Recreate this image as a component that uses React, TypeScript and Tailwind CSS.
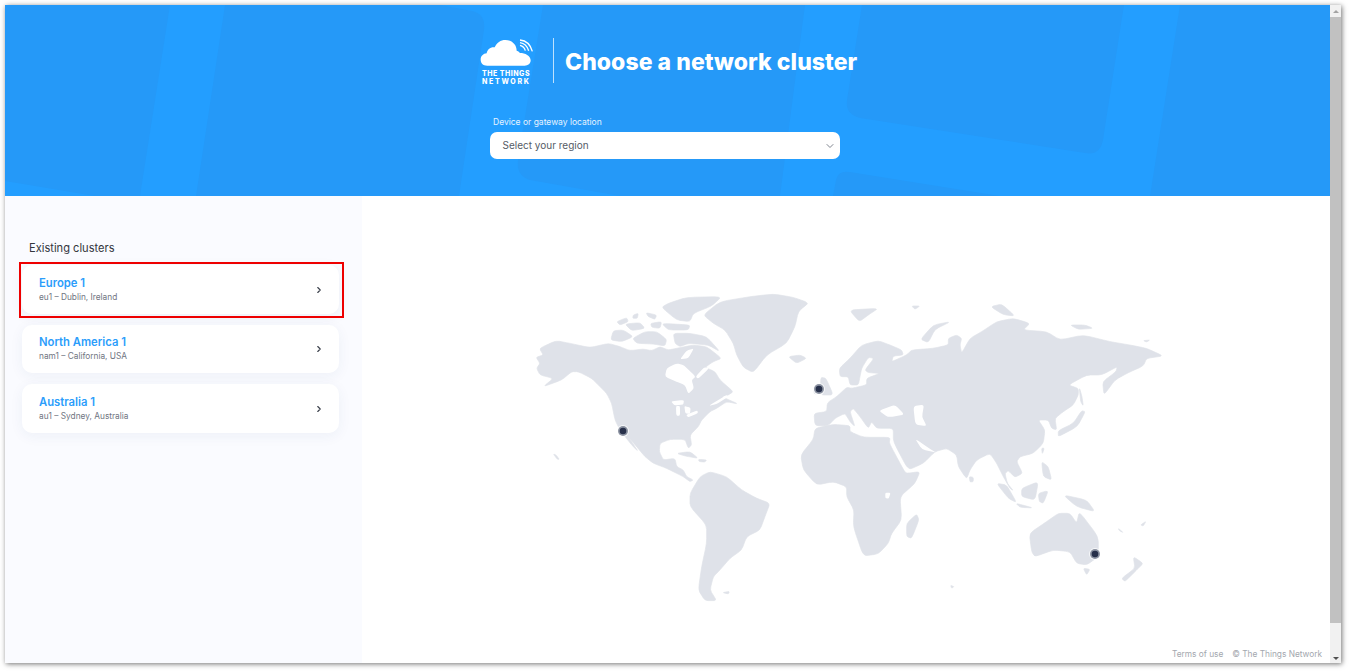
import React from 'react';
import { ChevronDown, ChevronRight } from 'lucide-react';

const clusters = [
  { name: 'Europe 1', detail: 'eu1 – Dublin, Ireland' },
  { name: 'North America 1', detail: 'nam1 – California, USA' },
  { name: 'Australia 1', detail: 'au1 – Sydney, Australia' },
];

const west = [
  // north america
  'M58,205 L108,182 L150,190 L210,203 L265,190 L300,200 L330,212 L370,207 L395,212 L420,200 L445,210 L470,205 L520,195 L560,200 L605,235 L580,245 L555,262 L585,275 L600,300 L640,335 L625,345 L605,350 L655,372 L620,365 L590,385 L570,395 L545,420 L535,440 L510,465 L515,495 L505,505 L495,478 L450,478 L420,490 L418,515 L430,540 L465,535 L470,560 L490,570 L500,590 L520,600 L510,605 L490,590 L440,565 L400,550 L375,530 L350,500 L325,470 L355,515 L335,495 L300,450 L285,420 L275,370 L260,340 L235,315 L215,295 L175,275 L155,275 L125,300 L70,320 L100,295 L60,285 L50,265 L60,250 L48,232 L70,225 Z',
  // arctic islands
  'M272,180 L280,152 L310,150 L340,170 L305,185 Z',
  'M290,125 L320,113 L325,125 L300,135 Z',
  'M315,132 L360,128 L375,145 L335,152 Z',
  'M340,105 L355,100 L352,115 L338,115 Z',
  'M378,98 L410,105 L405,118 L385,110 Z',
  'M392,130 L425,125 L420,145 L395,142 Z',
  'M375,155 L410,155 L440,178 L435,198 L400,192 L350,190 L338,175 Z',
  'M445,70 L500,52 L605,50 L575,78 L520,100 L510,125 L470,120 L425,82 Z',
  'M425,130 L510,135 L505,150 L445,150 Z',
  'M460,160 L510,160 L560,170 L600,215 L565,195 L505,190 L480,200 L465,190 Z',
  // greenland
  'M550,105 L600,65 L690,50 L760,42 L820,52 L865,68 L835,95 L825,140 L800,190 L740,225 L700,278 L670,262 L650,225 L640,190 L615,150 L580,130 Z',
  // iceland
  'M805,230 L840,225 L860,235 L830,250 Z',
  // south america
  'M510,640 L540,590 L570,575 L620,590 L665,630 L710,655 L750,670 L735,710 L720,750 L680,770 L665,810 L630,835 L600,870 L580,890 L570,930 L590,962 L555,962 L535,930 L545,860 L560,790 L560,735 L510,680 Z',
  // caribbean
  'M470,520 L510,515 L535,535 L495,528 Z',
  'M535,538 L560,540 L555,546 L538,545 Z',
  'M608,938 L628,934 L626,942 Z',
  'M100,522 L108,525 L118,538 L112,538 Z',
];

const east = [
  // eurasia
  'M42,400 L80,395 L82,368 L110,350 L140,322 L155,325 L200,315 L200,295 L240,280 L205,278 L195,270 L222,235 L205,232 L185,265 L180,290 L175,315 L150,315 L145,290 L120,290 L118,265 L150,235 L185,195 L235,182 L270,195 L305,210 L310,225 L280,228 L275,245 L320,225 L335,210 L400,205 L445,195 L445,175 L470,165 L485,175 L480,195 L485,220 L510,175 L545,155 L590,125 L640,115 L690,130 L670,150 L740,155 L780,180 L850,165 L930,185 L990,195 L1040,205 L1090,228 L1040,235 L1030,258 L985,278 L945,300 L912,345 L908,305 L948,275 L952,260 L905,285 L860,285 L805,315 L835,325 L835,345 L820,375 L790,395 L765,415 L770,450 L755,445 L745,420 L715,420 L735,450 L730,490 L700,520 L660,530 L650,545 L668,580 L645,592 L625,572 L615,580 L622,610 L640,632 L630,625 L610,590 L600,570 L590,550 L570,520 L530,540 L510,570 L500,597 L475,560 L470,525 L440,505 L405,515 L370,550 L325,570 L280,485 L280,445 L230,445 L215,425 L205,445 L180,410 L160,385 L150,395 L165,440 L150,425 L135,400 L105,415 L85,437 L45,437 Z',
  // africa
  'M2,525 L40,478 L45,445 L100,433 L150,437 L150,455 L190,472 L270,472 L268,490 L312,572 L320,580 L360,575 L345,610 L300,650 L305,720 L275,760 L265,790 L235,822 L190,828 L160,740 L162,690 L140,650 L140,620 L100,605 L50,615 L10,570 Z',
  // uk, ireland
  'M62,292 L78,295 L100,345 L62,345 Z',
  'M42,320 L58,318 L60,340 L42,342 Z',
  // madagascar
  'M350,702 L357,720 L335,775 L320,770 L320,730 Z',
  // svalbard, novaya zemlya, northern islands
  'M148,90 L235,85 L205,105 L178,125 Z',
  'M335,78 L360,78 L345,88 Z',
  'M362,178 L400,135 L452,125 L405,148 L385,188 Z',
  'M572,80 L605,72 L645,108 L610,104 Z',
  'M810,135 L855,135 L880,145 L835,148 Z',
  'M1030,182 L1050,180 L1040,186 Z',
  'M0,68 L25,70 L5,85 L0,84 Z',
  // sakhalin, japan, new zealand
  'M838,322 L846,350 L850,378 L842,365 Z',
  'M845,392 L856,395 L832,440 L775,470 L775,452 L820,430 Z',
  'M1000,830 L1030,850 L1010,870 L975,905 L965,895 L1005,865 Z',
  // south east asia
  'M665,625 L715,605 L705,660 L665,650 Z',
  'M590,610 L620,615 L650,668 L625,655 Z',
  'M648,670 L700,684 L660,682 Z',
  'M715,640 L745,632 L730,670 L718,665 Z',
  'M725,545 L745,560 L755,600 L730,590 Z',
  'M790,645 L860,660 L885,695 L830,680 Z',
  'M508,590 L520,592 L520,605 L510,606 Z',
  'M725,505 L733,505 L727,522 Z',
  // australia, tasmania
  'M688,760 L740,725 L775,700 L810,700 L830,730 L838,695 L895,770 L895,830 L860,855 L830,850 L810,815 L760,810 L705,830 L695,815 Z',
  'M850,865 L870,868 L860,885 Z',
  // small pacific islands
  'M955,745 L970,758 L958,752 Z',
  'M1022,735 L1038,724 L1030,738 Z',
  'M452,916 L462,920 L455,925 Z',
];

// inland water cut out of the land shapes, in the same coordinates
const eastWater = [
  'M236,392 L285,374 L314,404 L265,412 Z',
  'M340,378 L372,374 L366,410 L380,438 L346,434 Z',
  'M345,476 L388,505 L408,518 L366,508 Z',
  'M256,638 L272,638 L266,656 L256,654 Z',
];
const westWater = [
  // hudson bay and the straits north of it
  'M470,250 L440,265 L435,290 L470,305 L495,315 L505,342 L522,325 L515,300 L527,290 L492,256 Z',
  'M527,290 L552,262 L568,264 L535,296 Z',
  'M480,238 L500,212 L522,205 L505,235 Z',
  // great lakes
  'M453,364 L492,360 L490,374 L463,376 Z',
  'M468,378 L480,378 L480,407 L469,407 Z',
  'M493,378 L512,383 L510,402 L496,400 Z',
  'M498,405 L532,391 L534,400 L505,412 Z',
  'M565,378 L620,345 L625,350 L590,372 Z',
];

// cut the corners of a traced outline so the coast doesn't look like a polygon
function soften(d: string) {
  const pts = d.replace(/[MLZ]/g, ' ').trim().split(/\s+/).map(p => p.split(',').map(Number));
  const n = pts.length;
  const lerp = (a: number[], b: number[], t: number) => `${a[0] + (b[0] - a[0]) * t},${a[1] + (b[1] - a[1]) * t}`;
  let out = `M${lerp(pts[0], pts[1], 0.25)}`;
  for (let i = 1; i <= n; i++) {
    const p = pts[i % n];
    const prev = pts[i - 1];
    const next = pts[(i + 1) % n];
    out += ` L${lerp(p, prev, 0.25)} Q${p[0]},${p[1]} ${lerp(p, next, 0.25)}`;
  }
  return out + ' Z';
}

function Marker({ x, y }: { x: number; y: number }) {
  return (
    <g>
      <circle cx={x} cy={y} r="6" fill="#ffffff" fillOpacity="0.75" />
      <circle cx={x} cy={y} r="5" fill="#8b92a1" />
      <circle cx={x} cy={y} r="3.3" fill="#27304a" />
    </g>
  );
}

function WorldMap() {
  return (
    <svg width="660" height="330" viewBox="520 280 660 330" className="block">
      <g transform="translate(520 280) scale(0.3333)" fill="#dfe2e9" stroke="#dfe2e9" strokeWidth="2" strokeLinejoin="round">
        {west.map((d, i) => <path key={i} d={soften(d)} />)}
        {westWater.map((d, i) => <path key={i} d={soften(d)} fill="#ffffff" stroke="none" />)}
      </g>
      <g transform="translate(800 280) scale(0.3333)" fill="#dfe2e9" stroke="#dfe2e9" strokeWidth="2" strokeLinejoin="round">
        {east.map((d, i) => <path key={i} d={soften(d)} />)}
        {eastWater.map((d, i) => <path key={i} d={soften(d)} fill="#ffffff" stroke="none" />)}
      </g>
      <Marker x={819} y={389} />
      <Marker x={623} y={431} />
      <Marker x={1095} y={554} />
    </svg>
  );
}

function HeroShapes() {
  return (
    <svg className="absolute inset-0" width="1325" height="191" viewBox="5 5 1325 191" fill="#2599f8">
      <path d="M5,5 L170,5 L140,196 L95,196 L5,181 Z" />
      <path d="M225,5 L440,5 L472,11 Q486,14 484,30 L459,196 L196,196 Z" />
      <path d="M543,5 L805,5 L780,196 L620,196 L530,180 Q516,176 518,160 Z" />
      <path d="M862,5 L1124,5 L1103,140 Q1100,156 1085,153 L860,118 Q845,114 847,100 Z" />
      <path d="M833,196 L836,180 Q838,170 850,172 L1000,196 Z" />
      <path d="M1180,5 L1330,5 L1330,196 L1150,196 Z" />
    </svg>
  );
}

function Logo() {
  return (
    <div className="flex w-[55px] flex-col">
      <svg width="55" height="30" viewBox="30 20 165 90" fill="#ffffff">
        <path d="M52,103 C38,103 32,94 32,85 C32,74 40,67 50,66 C52,54 62,46 74,48 C80,34 92,26 106,26 C126,26 140,40 140,58 C142,58 146,60 150,65 C165,65 182,73 182,87 C182,97 174,103 164,103 Z" />
        <g fill="none" stroke="#ffffff" strokeWidth="4">
          <path d="M150,42 C158,44 164,50 166,58" />
          <path d="M150,34 C164,36 172,46 176,58" />
          <path d="M150,26 C170,28 182,42 187,60" />
        </g>
      </svg>
      <div className="ml-[2px] mt-[2px] text-[7px] font-extrabold leading-[8px] tracking-[0.5px] whitespace-nowrap text-white">THE THINGS</div>
      <div className="ml-[2px] text-[7px] font-extrabold leading-[8px] tracking-[1.7px] whitespace-nowrap text-white">NETWORK</div>
    </div>
  );
}

export default function App() {
  return (
    <div className="h-[672px] w-[1349px] overflow-hidden bg-white pl-[5px] pt-[5px] font-['Inter',sans-serif]">
      <div className="relative flex h-[658px] w-[1336px] bg-white shadow-[1px_1px_5px_rgba(0,0,0,0.55)]">
        <div className="flex w-[1325px] flex-col">
          {/* Hero */}
          <div className="relative h-[191px] shrink-0 overflow-hidden bg-[#239eff] pl-[475px] pt-[33px]">
            <HeroShapes />
            <div className="relative flex h-[45px] items-start">
              <Logo />
              <div className="ml-[18px] h-[45px] w-px bg-white/70" />
              <h1 className="ml-[11px] mt-[10px] text-[23px] font-extrabold leading-[29px] tracking-[0.05px] whitespace-nowrap text-white">Choose a network cluster</h1>
            </div>
            <div className="relative ml-[10px] mt-[34px] w-[350px]">
              <div className="pl-[3px] text-[8.5px] leading-[11px] text-[#e6f3ff]">Device or gateway location</div>
              <div className="mt-[4px] flex h-[27px] items-center justify-between rounded-[7px] bg-white pl-[12.5px] pr-[4px] text-[10px] text-[#555b66]">
                <span>Select your region</span>
                <ChevronDown size={12} strokeWidth={2} className="text-[#80858f]" />
              </div>
            </div>
          </div>
          {/* Body */}
          <div className="flex min-h-0 flex-1">
            <aside className="w-[357px] shrink-0 bg-[#fafbff] pl-[17px] pt-[45px]">
              <div className="pl-[7px] text-[11.1px] leading-[14px] text-[#33363d]">Existing clusters</div>
              <div className="mt-[10px] flex w-[317px] flex-col gap-[11px]">
                {clusters.map(c => (
                  <div key={c.name} className="flex h-[48.5px] items-center justify-between rounded-[10px] bg-white pl-[17px] pr-[15px] shadow-[0_3px_14px_rgba(40,60,120,0.06)]">
                    <div>
                      <div className="text-[11.25px] font-semibold leading-[14px] text-[#2b9dfb]">{c.name}</div>
                      <div className="mt-[1px] text-[8.3px] leading-[12px] text-[#70757f]">{c.detail}</div>
                    </div>
                    <ChevronRight size={10} strokeWidth={2.6} className="mt-[1px] text-[#3a3f4a]" />
                  </div>
                ))}
              </div>
            </aside>
            <main className="flex min-w-0 flex-1 flex-col items-start pl-[158px] pt-[84px]">
              <WorldMap />
              <div className="mt-[38px] flex w-[802px] justify-end gap-[9px] text-[8.3px] leading-[12px] text-[#a3a7ae]">
                <span>Terms of use</span>
                <span>© The Things Network</span>
              </div>
            </main>
          </div>
        </div>
        {/* Scrollbar */}
        <div className="flex w-[11px] flex-col items-center bg-[#f1f1f1]">
          <div className="flex h-[12px] w-full items-center justify-center">
            <div className="h-0 w-0 border-x-[3px] border-b-[3px] border-x-transparent border-b-[#a3a3a3]" />
          </div>
          <div className="h-[606px] w-full bg-[#c1c1c1]" />
          <div className="flex flex-1 items-end pb-[3px]">
            <div className="h-0 w-0 border-x-[3px] border-t-[3px] border-x-transparent border-t-[#505050]" />
          </div>
        </div>
        {/* Highlight around the first cluster */}
        <div className="absolute left-[14px] top-[257px] h-[56px] w-[325px] border-2 border-[#ee0000]" />
      </div>
    </div>
  );
}
